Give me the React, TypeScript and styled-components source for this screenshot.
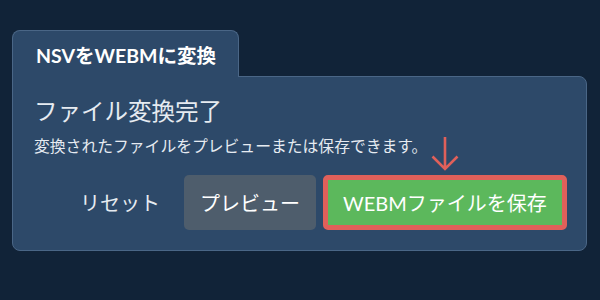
import React from 'react';
import styled, { createGlobalStyle } from 'styled-components';

const GlobalStyle = createGlobalStyle`
  html, body {
    margin: 0;
    padding: 0;
    background: #112338;
    font-family: Lato, "Noto Sans CJK JP", sans-serif;
  }
`;

const Page = styled.div`
  width: 600px;
  height: 300px;
  box-sizing: border-box;
  padding: 30px 13px 0 12px;
`;

const Tab = styled.div`
  width: 227px;
  height: 47px;
  box-sizing: border-box;
  background: #2d4969;
  border: 1px solid #4a6686;
  border-bottom: none;
  border-radius: 8px 8px 0 0;
  color: #ffffff;
  font-weight: 700;
  font-size: 19.5px;
  display: flex;
  align-items: center;
  padding: 0 0 0 23px;
  position: relative;
  z-index: 1;
  margin-bottom: -1px;
`;

const Panel = styled.div`
  box-sizing: border-box;
  height: 175px;
  background: #2d4969;
  border: 1px solid #4a6686;
  border-radius: 0 8px 8px 8px;
  padding: 19px 19px 20px 21px;
  display: flex;
  flex-direction: column;
`;

const Title = styled.div`
  color: #e6ebf1;
  font-size: 23.5px;
  line-height: 30px;
`;

const Message = styled.div`
  color: #e6ebf1;
  font-size: 15.8px;
  line-height: 20px;
  margin-top: 10px;
`;

const Actions = styled.div`
  margin-top: auto;
  display: flex;
  justify-content: flex-end;
  align-items: center;
  gap: 7px;
  position: relative;
`;

const TextButton = styled.button`
  background: transparent;
  border: none;
  color: #e6ebf1;
  font-family: inherit;
  font-size: 20px;
  height: 55px;
  padding: 0 16px 0 24px;
  margin-right: 1px;
`;

const Button = styled.button<{ $variant: 'secondary' | 'primary' }>`
  font-family: inherit;
  font-size: 20px;
  color: #ffffff;
  height: 55px;
  border-radius: 5px;
  box-sizing: border-box;
  background: ${p => (p.$variant === 'primary' ? '#5cb85c' : '#4e5d6c')};
  border: ${p => (p.$variant === 'primary' ? '5px solid #e0605a' : 'none')};
  padding: 0;
  width: ${p => (p.$variant === 'primary' ? '244px' : '132px')};
`;

const SaveWrap = styled.div`
  position: relative;
`;

const Arrow = styled.svg`
  position: absolute;
  left: 108px;
  top: -39px;
`;

export default function App() {
  return (
    <>
      <GlobalStyle />
      <Page>
        <Tab>NSVをWEBMに変換</Tab>
        <Panel>
          <Title>ファイル変換完了</Title>
          <Message>変換されたファイルをプレビューまたは保存できます。</Message>
          <Actions>
            <TextButton>リセット</TextButton>
            <Button $variant="secondary">プレビュー</Button>
            <SaveWrap>
              <Arrow width="28" height="36" viewBox="0 0 28 36">
                <path
                  d="M14 1 V33 M1.5 20.5 L14 33 L26.5 20.5"
                  fill="none"
                  stroke="#e0605a"
                  strokeWidth="2.6"
                />
              </Arrow>
              <Button $variant="primary">WEBMファイルを保存</Button>
            </SaveWrap>
          </Actions>
        </Panel>
      </Page>
    </>
  );
}
